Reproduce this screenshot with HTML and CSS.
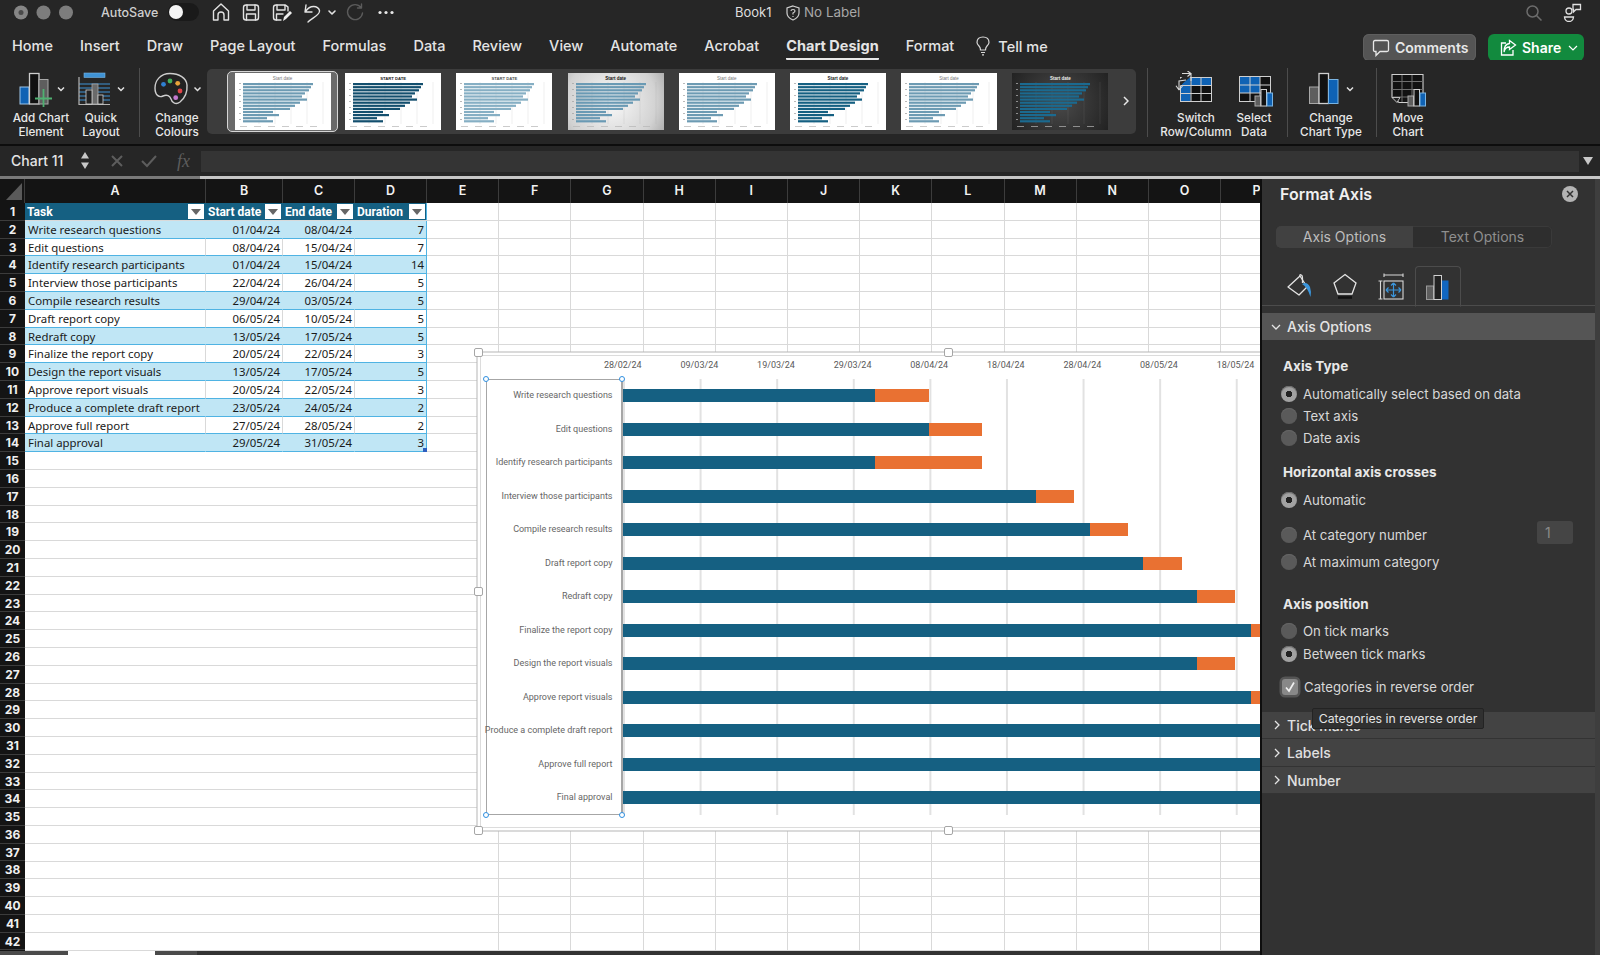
FILE: index.html
```html
<!DOCTYPE html>
<html lang="en">
<head>
<meta charset="utf-8">
<title>Book1</title>
<link rel="stylesheet" href="styles.css">
</head>
<body>
<svg class="defs" width="0" height="0" aria-hidden="true">
  <symbol id="bars" viewBox="0 0 96 57">
    <g stroke="#9a9a9a" stroke-opacity=".3" stroke-width=".5"><path d="M24 9V51M40 9V51M56 9V51M72 9V51M88 9V51"/></g>
    <g fill="currentColor">
      <rect x="8" y="10" width="70" height="2.200"/><rect x="8" y="13.100" width="68" height="2.200"/><rect x="8" y="16.200" width="66" height="2.200"/><rect x="8" y="19.300" width="62" height="2.200"/><rect x="8" y="22.400" width="59" height="2.200"/><rect x="8" y="25.500" width="64" height="2.200"/><rect x="8" y="28.600" width="57" height="2.200"/><rect x="8" y="31.700" width="52" height="2.200"/><rect x="8" y="34.800" width="47" height="2.200"/><rect x="8" y="37.900" width="30" height="2.200"/><rect x="8" y="41" width="36" height="2.200"/><rect x="8" y="44.100" width="24" height="2.200"/><rect x="8" y="47.200" width="30" height="2.200"/>
    </g>
    <g fill="#b5b5b5" fill-opacity=".7">
      <rect x="5" y="53" width="7" height="1"/><rect x="19" y="53" width="7" height="1"/><rect x="33" y="53" width="7" height="1"/><rect x="47" y="53" width="7" height="1"/><rect x="61" y="53" width="7" height="1"/><rect x="75" y="53" width="7" height="1"/>
    </g>
    <g fill="#a8a8a8"><rect x="4" y="10" width="2" height=".8"/><rect x="4" y="16" width="2" height=".8"/><rect x="4" y="22" width="2" height=".8"/><rect x="4" y="28" width="2" height=".8"/><rect x="4" y="34" width="2" height=".8"/><rect x="4" y="40" width="2" height=".8"/><rect x="4" y="46" width="2" height=".8"/></g>
  </symbol>
</svg>
<div class="app">
  <header class="titlebar">
    <svg class="lights" viewBox="12 0 62 26" width="62" height="26"><circle cx="21" cy="12.500" r="7" fill="#868686"/><circle cx="21" cy="12.500" r="2.500" fill="#4a4a4a"/><circle cx="43.500" cy="12.500" r="7" fill="#7d7d7d"/><circle cx="66" cy="12.500" r="7" fill="#7d7d7d"/></svg>
    <span class="autosave">AutoSave</span>
    <span class="toggle"><span class="knob"></span></span>
    <svg class="quick" viewBox="208 0 194 26" width="194" height="26" fill="none" stroke="#e2e2e2" stroke-width="1.400" stroke-linejoin="round" stroke-linecap="round">
      <path d="M221 4L213.500 11V20H218V15Q218 12 221 12Q224 12 224 15V20H228.500V11Z"/>
      <rect x="243.500" y="5" width="15" height="15" rx="2.500"/><path d="M247 5V10H255V5M246.500 20V14H255.500V20"/>
      <path d="M281 20H276Q273.500 20 273.500 17.500V7.500Q273.500 5 276 5H284Q286 5 288 7V11"/><path d="M277 5V10H285V5M276.500 20V14H283"/>
      <path d="M283 21L284 17L290 11L292 13L286 19Z" fill="#f0f0f0" stroke="none"/>
      <path d="M306 5L305 12L312 12M305.500 11.500C310 4.500 318 5.500 319.500 10.500C320.500 15 312 18 308 22"/>
      <path d="M329 11L332 14L335 11" stroke-width="1.600"/>
      <path d="M361 7.500A7.500 7.500 0 1 0 362.500 13M361.500 4V8H357.500" stroke="#5b5b5b"/>
      <g fill="#e8e8e8" stroke="none"><circle cx="380" cy="12.500" r="1.600"/><circle cx="386" cy="12.500" r="1.600"/><circle cx="392" cy="12.500" r="1.600"/></g>
    </svg>
    <span class="doc">Book1</span>
    <svg class="shield" viewBox="0 0 14 16" width="14" height="16" fill="none" stroke="#d0d0d0" stroke-width="1.200"><path d="M7 1L13 3V8Q13 12.500 7 15Q1 12.500 1 8V3Z"/><path d="M5 6Q5 4.500 7 4.500Q9 4.500 9 6Q9 7 7 8V9.500M7 11V12"/></svg>
    <span class="label">No Label</span>
    <svg class="search" viewBox="0 0 18 18" width="18" height="18" fill="none" stroke="#6c6c6c" stroke-width="1.500"><circle cx="7.500" cy="7.500" r="5.500"/><path d="M11.500 11.500L16.500 16.500"/></svg>
    <svg class="people" viewBox="0 0 20 20" width="20" height="20" fill="none" stroke="#e0e0e0" stroke-width="1.300"><circle cx="6" cy="9" r="3"/><path d="M1.500 15H10.500Q10 19.500 6 19.500Q2 19.500 1.500 15Z"/><path d="M10 2.500H17.500V7.500H13L10.500 10V7.500H10Z"/></svg>
  </header>

  <nav class="tabs">
    <span class="tab">Home</span><span class="tab">Insert</span><span class="tab">Draw</span><span class="tab">Page Layout</span><span class="tab">Formulas</span><span class="tab">Data</span><span class="tab">Review</span><span class="tab">View</span><span class="tab">Automate</span><span class="tab">Acrobat</span><span class="tab tab-active">Chart Design</span><span class="tab">Format</span>
    <span class="tellme"><svg viewBox="0 0 14 20" width="14" height="20" fill="none" stroke="#d8d8d8" stroke-width="1.200"><path d="M4.500 14Q4.500 11.500 3 10Q1 8 1 6.500Q1 1 7 1Q13 1 13 6.500Q13 8 11 10Q9.500 11.500 9.500 14Z"/><path d="M5 16.500H9M6 18.800H8"/></svg>Tell me</span>
    <span class="tab-actions">
      <span class="btn btn-comments"><svg viewBox="0 0 18 18" width="18" height="18" fill="none" stroke="#e8e8e8" stroke-width="1.300"><path d="M3 1.500H15Q16.500 1.500 16.500 3V11Q16.500 12.500 15 12.500H8L4 16.500V12.500H3Q1.500 12.500 1.500 11V3Q1.500 1.500 3 1.500Z"/></svg>Comments</span>
      <span class="btn btn-share"><svg viewBox="0 0 18 18" width="18" height="18" fill="none" stroke="#fff" stroke-width="1.300"><path d="M7 4H2.500V16H14V11"/><path d="M10.500 1.500L16.500 6L10.500 10.500V8Q6 8 5 13Q5 5 10.500 4.500Z"/></svg>Share<svg class="chev" viewBox="0 0 10 6" width="10" height="6" fill="none" stroke="#fff" stroke-width="1.200"><path d="M1 1L5 5L9 1"/></svg></span>
    </span>
  </nav>

  <section class="ribbon">
    <div class="tool tool-add">
      <svg viewBox="12 71 58 36" width="58" height="36">
        <rect x="20" y="87" width="9" height="17" fill="#0f62b4" stroke="#9cc4e8"/>
        <rect x="29.500" y="73.500" width="9.500" height="30.500" fill="#111" stroke="#cfcfcf" stroke-width="1.300"/>
        <rect x="39" y="79.500" width="9" height="24.500" fill="#5e5e5e" stroke="#a8a8a8"/>
        <path d="M43.500 89V107M35 98.500H52" stroke="#4fb071" stroke-width="1.800"/>
        <path d="M58 87.500L61 90.500L64 87.500" fill="none" stroke="#e0e0e0" stroke-width="1.500"/>
      </svg>
      <span class="tool-label">Add Chart<br>Element</span>
    </div>
    <div class="tool tool-quick">
      <svg viewBox="70 71 62 36" width="62" height="36">
        <rect x="84" y="73" width="21" height="4.500" fill="#3f93d6" stroke="#7ab4e2" stroke-width=".6"/>
        <path d="M79 84H110M79 88H110M79 92H110M79 96H110M79 100H110" stroke="#3f93d6" stroke-width="1"/>
        <path d="M79 77V104.500H110" fill="none" stroke="#b4b4b4" stroke-width="1.200"/>
        <rect x="92" y="84" width="6" height="20" fill="#6a6a6a" stroke="#a8a8a8" stroke-width=".8"/>
        <rect x="86" y="90" width="6" height="14" fill="#222" stroke="#cfcfcf" stroke-width=".8"/>
        <rect x="98" y="95" width="5" height="9" fill="#222" stroke="#cfcfcf" stroke-width=".8"/>
        <path d="M118 87.500L121 90.500L124 87.500" fill="none" stroke="#e0e0e0" stroke-width="1.500"/>
      </svg>
      <span class="tool-label">Quick<br>Layout</span>
    </div>
    <span class="sep sep-1"></span>
    <div class="tool tool-colours">
      <svg viewBox="147 71 60 36" width="60" height="36">
        <path d="M170 73.500C160 73.500 155 81 155 88C155 95 159 98 163 96C167 94 170 96 171 99C172 103 176 105 180 102C185 98 187.500 92 187 85C186.500 78 179 73.500 170 73.500Z" fill="#222" stroke="#cdcdcd" stroke-width="1.400"/>
        <circle cx="163.500" cy="84.300" r="2.400" fill="#2f7fd0"/><circle cx="170" cy="81" r="2.400" fill="#44b05c"/><circle cx="177.700" cy="83.300" r="2.400" fill="#e8a33a"/><circle cx="180" cy="91" r="2.400" fill="#e0454a"/><circle cx="175.700" cy="97.700" r="2.400" fill="#c47ad0"/>
        <path d="M194.500 87.500L197.500 90.500L200.500 87.500" fill="none" stroke="#e0e0e0" stroke-width="1.500"/>
      </svg>
      <span class="tool-label">Change<br>Colours</span>
    </div>
    <div class="gallery">
      <div class="thumb thumb-sel"><div class="thumb-in thumb-plain"><span class="thumb-title">Start date</span><svg class="thumb-bars"><use href="#bars"/></svg></div></div>
      <div class="thumb thumb-strong"><span class="thumb-title thumb-caps">START DATE</span><svg class="thumb-bars"><use href="#bars"/></svg></div>
      <div class="thumb thumb-light"><span class="thumb-title thumb-caps">START DATE</span><svg class="thumb-bars"><use href="#bars"/></svg></div>
      <div class="thumb thumb-grad"><span class="thumb-title">Start date</span><svg class="thumb-bars"><use href="#bars"/></svg></div>
      <div class="thumb thumb-plain"><span class="thumb-title">Start date</span><svg class="thumb-bars"><use href="#bars"/></svg></div>
      <div class="thumb thumb-blue"><span class="thumb-title">Start date</span><svg class="thumb-bars"><use href="#bars"/></svg></div>
      <div class="thumb thumb-plain"><span class="thumb-title">Start date</span><svg class="thumb-bars"><use href="#bars"/></svg></div>
      <div class="thumb thumb-dark"><span class="thumb-title">Start date</span><svg class="thumb-bars"><use href="#bars"/></svg></div>
      <svg class="gallery-next" viewBox="0 0 6 10" width="6" height="10" fill="none" stroke="#e8e8e8" stroke-width="1.500"><path d="M1 1L5 5L1 9"/></svg>
    </div>
    <span class="sep sep-2"></span>
    <div class="tool tool-switch">
      <svg viewBox="1167 71 58 36" width="58" height="36">
        <rect x="1180.500" y="77.500" width="31" height="24" fill="#111" stroke="#cfcfcf"/>
        <path d="M1191 78H1211V85.500H1191ZM1181 86H1190.500V101H1181ZM1186 78H1190.500V85.500H1181Z" fill="#0f62b4"/>
        <path d="M1181 85.500H1211M1181 93.500H1211M1191 78V101M1201 78V101" stroke="#cfcfcf" fill="none"/>
        <path d="M1178 84L1190 74" stroke="#262626" stroke-width="5"/>
        <path d="M1182 73.500H1191V81M1187.500 71L1191 73.500L1187.500 76.500M1179 90V81L1186 80M1179 90L1176 85.800M1179 90L1182.500 86" fill="none" stroke="#d8d8d8" stroke-width="1.100"/>
      </svg>
      <span class="tool-label">Switch<br>Row/Column</span>
    </div>
    <div class="tool tool-select">
      <svg viewBox="1225 71 58 36" width="58" height="36">
        <rect x="1239.500" y="76.500" width="31" height="25" fill="#111" stroke="#cfcfcf"/>
        <rect x="1240" y="77" width="20" height="16" fill="#0f62b4"/>
        <path d="M1240 85H1270M1240 93H1270M1250 77V101M1260 77V101" stroke="#cfcfcf" fill="none"/>
        <rect x="1255" y="96" width="5.500" height="10" fill="#5e5e5e" stroke="#a8a8a8"/>
        <rect x="1261" y="89.500" width="5.500" height="16.500" fill="#111" stroke="#cfcfcf"/>
        <rect x="1267" y="93" width="5.500" height="13" fill="#0f62b4" stroke="#7ab4e2"/>
      </svg>
      <span class="tool-label">Select<br>Data</span>
    </div>
    <span class="sep sep-3"></span>
    <div class="tool tool-type">
      <svg viewBox="1291 71 80 36" width="80" height="36">
        <rect x="1309.500" y="87" width="9.500" height="16.500" fill="#5e5e5e" stroke="#a8a8a8"/>
        <rect x="1319" y="73.500" width="9.500" height="30" fill="#111" stroke="#cfcfcf" stroke-width="1.300"/>
        <rect x="1328.500" y="79.500" width="9.500" height="24" fill="#0f62b4" stroke="#7ab4e2"/>
        <path d="M1347 87.500L1350 90.500L1353 87.500" fill="none" stroke="#e0e0e0" stroke-width="1.500"/>
      </svg>
      <span class="tool-label">Change<br>Chart Type</span>
    </div>
    <span class="sep sep-4"></span>
    <div class="tool tool-move">
      <svg viewBox="1380 71 56 36" width="56" height="36">
        <path d="M1392 74.500H1423V102.500H1399L1392 97Z" fill="#111" stroke="#cfcfcf" stroke-width="1.100"/>
        <path d="M1392 81.500H1423M1392 89.500H1423M1392 97H1423M1402 75V102M1412 75V102" stroke="#6f6f6f" fill="none"/>
        <path d="M1392 97.500H1400L1397 102.500Z" fill="#222" stroke="#cfcfcf" stroke-width=".9"/>
        <rect x="1408" y="96" width="5.500" height="10" fill="#5e5e5e" stroke="#a8a8a8"/>
        <rect x="1414" y="89.500" width="5.500" height="16.500" fill="#111" stroke="#cfcfcf"/>
        <rect x="1420" y="93" width="5.500" height="13" fill="#0f62b4" stroke="#7ab4e2"/>
      </svg>
      <span class="tool-label">Move<br>Chart</span>
    </div>
  </section>

  <section class="formula">
    <span class="namebox">Chart 11</span>
    <svg class="spin" viewBox="0 0 10 19" width="10" height="19" fill="#c8c8c8"><path d="M5 1L9 7.500H1ZM5 18L1 11.500H9Z"/></svg>
    <svg class="fx-btns" viewBox="0 0 90 18" width="90" height="18" fill="none" stroke="#5d5d5d" stroke-width="2"><path d="M3 4L13 14M13 4L3 14M33 9L38 14L47 4"/></svg>
    <span class="fx">fx</span>
    <span class="formula-input"></span>
    <svg class="formula-down" viewBox="0 0 10 8" width="10" height="8" fill="#c8c8c8"><path d="M0 0H10L5 8Z"/></svg>
  </section>
  <div class="rule"></div>

  <main class="workspace">
    <section class="sheet">
      <div class="colhead">
        <div class="corner"><span class="corner-tri"></span></div>
        <div class="collabels">
          <span>A</span><span>B</span><span>C</span><span>D</span><span>E</span><span>F</span><span>G</span><span>H</span><span>I</span><span>J</span><span>K</span><span>L</span><span>M</span><span>N</span><span>O</span><span>P</span>
        </div>
      </div>
      <div class="sheet-body">
        <div class="rowheads">
          <span>1</span><span>2</span><span>3</span><span>4</span><span>5</span><span>6</span><span>7</span><span>8</span><span>9</span><span>10</span><span>11</span><span>12</span><span>13</span><span>14</span><span>15</span><span>16</span><span>17</span><span>18</span><span>19</span><span>20</span><span>21</span><span>22</span><span>23</span><span>24</span><span>25</span><span>26</span><span>27</span><span>28</span><span>29</span><span>30</span><span>31</span><span>32</span><span>33</span><span>34</span><span>35</span><span>36</span><span>37</span><span>38</span><span>39</span><span>40</span><span>41</span><span>42</span>
        </div>
        <div class="grid">
          <i class="vline"></i><i class="vline"></i><i class="vline"></i><i class="vline"></i><i class="vline"></i><i class="vline"></i><i class="vline"></i><i class="vline"></i><i class="vline"></i><i class="vline"></i><i class="vline"></i><i class="vline"></i><i class="vline"></i><i class="vline"></i><i class="vline"></i><i class="vline"></i>
          <div class="table">
            <div class="th">Task<b class="filter"></b></div><div class="th">Start date<b class="filter"></b></div><div class="th">End date<b class="filter"></b></div><div class="th">Duration<b class="filter"></b></div>
            <div class="tr band"><span>Write research questions</span><span class="n">01/04/24</span><span class="n">08/04/24</span><span class="n">7</span></div>
            <div class="tr"><span>Edit questions</span><span class="n">08/04/24</span><span class="n">15/04/24</span><span class="n">7</span></div>
            <div class="tr band"><span>Identify research participants</span><span class="n">01/04/24</span><span class="n">15/04/24</span><span class="n">14</span></div>
            <div class="tr"><span>Interview those participants</span><span class="n">22/04/24</span><span class="n">26/04/24</span><span class="n">5</span></div>
            <div class="tr band"><span>Compile research results</span><span class="n">29/04/24</span><span class="n">03/05/24</span><span class="n">5</span></div>
            <div class="tr"><span>Draft report copy</span><span class="n">06/05/24</span><span class="n">10/05/24</span><span class="n">5</span></div>
            <div class="tr band"><span>Redraft copy</span><span class="n">13/05/24</span><span class="n">17/05/24</span><span class="n">5</span></div>
            <div class="tr"><span>Finalize the report copy</span><span class="n">20/05/24</span><span class="n">22/05/24</span><span class="n">3</span></div>
            <div class="tr band"><span>Design the report visuals</span><span class="n">13/05/24</span><span class="n">17/05/24</span><span class="n">5</span></div>
            <div class="tr"><span>Approve report visuals</span><span class="n">20/05/24</span><span class="n">22/05/24</span><span class="n">3</span></div>
            <div class="tr band"><span>Produce a complete draft report</span><span class="n">23/05/24</span><span class="n">24/05/24</span><span class="n">2</span></div>
            <div class="tr"><span>Approve full report</span><span class="n">27/05/24</span><span class="n">28/05/24</span><span class="n">2</span></div>
            <div class="tr band"><span>Final approval</span><span class="n">29/05/24</span><span class="n">31/05/24</span><span class="n fillhandle">3</span></div>
          </div>

          <div class="chart">
            <i class="handle h-tl"></i><i class="handle h-tm"></i><i class="handle h-ml"></i><i class="handle h-bl"></i><i class="handle h-bm"></i>
            <div class="axis"><span>28/02/24</span><span>09/03/24</span><span>19/03/24</span><span>29/03/24</span><span>08/04/24</span><span>18/04/24</span><span>28/04/24</span><span>08/05/24</span><span>18/05/24</span></div>
            <div class="plot">
              <div class="cats">
                <i class="dot d-tl"></i><i class="dot d-tr"></i><i class="dot d-bl"></i><i class="dot d-br"></i>
                <span>Write research questions</span><span>Edit questions</span><span>Identify research participants</span><span>Interview those participants</span><span>Compile research results</span><span>Draft report copy</span><span>Redraft copy</span><span>Finalize the report copy</span><span>Design the report visuals</span><span>Approve report visuals</span><span>Produce a complete draft report</span><span>Approve full report</span><span>Final approval</span>
              </div>
              <div class="tracks">
                <div class="track"><i class="start" style="width:252.8px"></i><i class="dur" style="width:53.6px"></i></div>
                <div class="track"><i class="start" style="width:306.4px"></i><i class="dur" style="width:53.6px"></i></div>
                <div class="track"><i class="start" style="width:252.8px"></i><i class="dur" style="width:107.2px"></i></div>
                <div class="track"><i class="start" style="width:413.6px"></i><i class="dur" style="width:38.3px"></i></div>
                <div class="track"><i class="start" style="width:467.3px"></i><i class="dur" style="width:38.3px"></i></div>
                <div class="track"><i class="start" style="width:520.9px"></i><i class="dur" style="width:38.3px"></i></div>
                <div class="track"><i class="start" style="width:574.5px"></i><i class="dur" style="width:38.3px"></i></div>
                <div class="track"><i class="start" style="width:628.1px"></i><i class="dur" style="width:23px"></i></div>
                <div class="track"><i class="start" style="width:574.5px"></i><i class="dur" style="width:38.3px"></i></div>
                <div class="track"><i class="start" style="width:628.1px"></i><i class="dur" style="width:23px"></i></div>
                <div class="track"><i class="start" style="width:651.1px"></i><i class="dur" style="width:15.3px"></i></div>
                <div class="track"><i class="start" style="width:681.7px"></i><i class="dur" style="width:15.3px"></i></div>
                <div class="track"><i class="start" style="width:697.1px"></i><i class="dur" style="width:23px"></i></div>
              </div>
            </div>
          </div>
        </div>
      </div>
      <div class="sheet-foot"><i class="foot-a"></i><i class="foot-tab"></i><i class="foot-b"></i><i class="foot-c"></i></div>
    </section>

    <aside class="panel">
      <div class="panel-head">
        <h2>Format Axis</h2>
        <svg class="close" viewBox="0 0 16 16" width="16" height="16"><circle cx="8" cy="8" r="8" fill="#b4b4b4"/><path d="M5 5L11 11M11 5L5 11" stroke="#333" stroke-width="1.500"/></svg>
      </div>
      <div class="seg"><span class="seg-on">Axis Options</span><span>Text Options</span></div>
      <div class="picons">
        <span class="picon">
          <svg viewBox="0 0 25 24" width="25" height="24" fill="none" stroke="#e4e4e4" stroke-width="1.300" stroke-linejoin="round"><path d="M1 13L13 2L20 13L12 21Z"/><path d="M13 2Q12.500 .5 14 .8Q15.500 1 15.500 5V9"/><path d="M15 10Q20 7 23 13Q24.500 17 23.500 23Q21.500 17 19.500 14Q17.500 11.500 15 10Z" fill="#3b96dc" stroke="none"/></svg>
        </span>
        <span class="picon">
          <svg viewBox="0 0 24 26" width="24" height="26" fill="none" stroke="#e4e4e4" stroke-width="1.300"><path d="M12 1.500L23 10L19 21H5L1 10Z"/><path d="M5 24.500H19" stroke="#111" stroke-width="2.500"/></svg>
        </span>
        <span class="picon">
          <svg viewBox="0 0 26 27" width="26" height="27" fill="none" stroke="#d8d8d8" stroke-width="1.100"><path d="M6 2H25M6 .5V4M25 .5V4"/><rect x="6" y="8" width="19" height="18"/><path d="M.5 8H4.500M.5 26H4.500M2.500 8V26"/><path d="M8 17H23M15.500 10V24M8 17L10.500 14.500M8 17L10.500 19.500M23 17L20.500 14.500M23 17L20.500 19.500M15.500 10L13 12.500M15.500 10L18 12.500M15.500 24L13 21.500M15.500 24L18 21.500" stroke="#3b96dc" stroke-width="1.200"/></svg>
        </span>
        <span class="picon picon-on">
          <svg viewBox="0 0 24 26" width="24" height="26"><rect x=".5" y="12" width="7" height="13.500" fill="#5e5e5e" stroke="#9a9a9a"/><rect x="8" y="1.500" width="7.500" height="24" fill="#222" stroke="#d0d0d0"/><rect x="16" y="6.500" width="6.500" height="19" fill="#1166c0"/></svg>
        </span>
      </div>
      <div class="sec-open"><svg viewBox="0 0 10 6" width="10" height="6" fill="none" stroke="#e4e4e4" stroke-width="1.300"><path d="M1 1L5 5L9 1"/></svg>Axis Options</div>

      <h3 class="opt-title t1">Axis Type</h3>
      <div class="opts o1">
        <label class="radio on">Automatically select based on data</label>
        <label class="radio">Text axis</label>
        <label class="radio">Date axis</label>
      </div>
      <h3 class="opt-title t2">Horizontal axis crosses</h3>
      <div class="opts o2"><label class="radio on">Automatic</label></div>
      <div class="opts o3"><label class="radio">At category number</label><span class="numbox">1</span></div>
      <div class="opts o4"><label class="radio">At maximum category</label></div>
      <h3 class="opt-title t3">Axis position</h3>
      <div class="opts o5">
        <label class="radio">On tick marks</label>
        <label class="radio on">Between tick marks</label>
      </div>
      <div class="check-row"><span class="check"><svg viewBox="0 0 12 12" width="12" height="12" fill="none" stroke="#f0f0f0" stroke-width="1.700"><path d="M2 6.500L5 10L10 1.500"/></svg></span>Categories in reverse order</div>

      <div class="sec-list">
        <div class="sec"><svg viewBox="0 0 6 10" width="6" height="10" fill="none" stroke="#e4e4e4" stroke-width="1.300"><path d="M1 1L5 5L1 9"/></svg>Tick marks</div>
        <div class="sec"><svg viewBox="0 0 6 10" width="6" height="10" fill="none" stroke="#e4e4e4" stroke-width="1.300"><path d="M1 1L5 5L1 9"/></svg>Labels</div>
        <div class="sec"><svg viewBox="0 0 6 10" width="6" height="10" fill="none" stroke="#e4e4e4" stroke-width="1.300"><path d="M1 1L5 5L1 9"/></svg>Number</div>
      </div>
      <div class="tooltip">Categories in reverse order</div>
    </aside>
  </main>
</div>
</body>
</html>
```
FILE: styles.css
```css
* { box-sizing: border-box; }
html, body { margin: 0; height: 100%; overflow: hidden; background: #262626; }
body { font-family: "Inter", "Liberation Sans", sans-serif; color: #e6e6e6; }
.defs { display: block; }
.app { width: 1600px; height: 955px; display: flex; flex-direction: column; overflow: hidden; }

/* Title bar */
.titlebar { height: 32px; flex: none; display: flex; align-items: flex-start; background: #262626; font-size: 13px; }
.lights { margin-left: 12px; flex: none; }
.autosave { width: 67px; margin-left: 27px; line-height: 25px; font-weight: 500; color: #cfcfcf; font-size: 12.5px; }
.toggle { width: 31px; height: 18px; margin-top: 3px; border-radius: 9px; background: #1a1a1a; display: flex; align-items: center; padding-left: 1px; }
.knob { width: 14px; height: 14px; border-radius: 50%; background: #f4f4f4; }
.quick { margin-left: 9px; flex: none; }
.doc { margin-left: 333px; width: 49px; line-height: 25px; color: #dedede; }
.shield { margin: 5px 0 0 2px; flex: none; }
.label { margin-left: 4px; line-height: 25px; color: #a8a8a8; font-size: 13.4px; }
.search { margin: 4px 0 0 auto; flex: none; }
.people { margin: 2px 17px 0 20px; flex: none; }

/* Tabs */
.tabs { height: 28px; flex: none; display: flex; align-items: flex-start; gap: 27px; padding-left: 12px; font-size: 14.5px; font-weight: 500; background: #262626; color: #e4e4e4; }
.tab { line-height: 28px; height: 28px; }
.tab-active { font-weight: 700; border-bottom: 2px solid #e8e8e8; border-radius: 1px; }
.tellme { display: flex; align-items: center; gap: 8px; height: 28px; margin-left: -5px; }
.tab-actions { margin-left: auto; display: flex; gap: 12px; padding: 2px 16px 0 0; }
.btn { height: 27px; border-radius: 6px; display: flex; align-items: center; font-weight: 600; font-size: 14px; }
.btn-comments { width: 113px; background: #545454; color: #e8e8e8; padding-left: 9px; gap: 5px; box-shadow: inset 0 0 0 1px #5e5e5e; }
.btn-share { width: 96px; background: #128a3e; color: #fff; padding-left: 11px; gap: 5px; }
.chev { margin-left: 2px; }

/* Ribbon */
.ribbon { height: 86px; flex: none; display: flex; align-items: flex-start; padding-left: 12px; background: #262626; border-bottom: 2px solid #0d0d0d; }
.tool { flex: none; display: flex; flex-direction: column; align-items: center; padding-top: 11px; }
.tool svg { display: block; flex: none; }
.tool-label { margin-top: 5px; font-size: 11.7px; line-height: 13.5px; text-align: center; color: #e8e8e8; font-weight: 500; white-space: nowrap; }
.tool-add { width: 58px; }
.tool-quick { width: 62px; }
.tool-colours { width: 60px; }
.tool-switch { width: 58px; }
.tool-select { width: 58px; }
.tool-type { width: 80px; }
.tool-move { width: 56px; }
.sep { flex: none; width: 1px; height: 69px; margin-top: 8px; background: #4c4c4c; }
.sep-1 { margin: 8px 7px 0 7px; }
.sep-2 { margin: 8px 19px 0 11px; }
.sep-3 { margin: 8px 3px 0 4px; }
.sep-4 { margin: 8px 3px 0 5px; }
.gallery { flex: none; width: 929px; height: 65px; margin-top: 9px; padding: 4px 0 0 20px; border-radius: 5px; background: #3c3c3c; display: flex; align-items: flex-start; gap: 15.200px; }
.thumb { flex: none; width: 96px; height: 57px; display: flex; flex-direction: column; align-items: center; overflow: hidden; background: #fff; color: #6d9bb3; position: relative; }
.thumb-sel { width: 111px; height: 61px; margin: -2px -8px 0 0; border: 1.5px solid #d6d6d6; border-radius: 5px; background: #6a6a6a; align-items: center; justify-content: center; padding: 0; }
.thumb-in { width: 96px; height: 57px; background: #fff; display: flex; flex-direction: column; align-items: center; position: relative; color: #6d9bb3; }
.thumb-title { font-size: 4.500px; line-height: 6px; margin-top: 3px; color: #777; font-family: "Liberation Sans", sans-serif; }
.thumb-caps { font-weight: 700; font-size: 4.200px; color: #555; }
.thumb-bars { position: absolute; left: 0; top: 0; width: 96px; height: 57px; }
.thumb-strong { color: #134f6e; }
.thumb-strong .thumb-title { color: #222; }
.thumb-light { color: #86afc4; }
.thumb-grad { background: radial-gradient(circle at 45% 50%, #fafafa 0%, #d2d2d2 75%, #b0b0b0 100%); color: #6a9ab4; }
.thumb-grad .thumb-title { color: #111; font-weight: 700; }
.thumb-blue { color: #156082; }
.thumb-blue .thumb-title { color: #222; font-weight: 700; }
.thumb-dark { background: radial-gradient(circle at 50% 50%, #4a4a4a 0%, #222 100%); color: #1b6a90; }
.thumb-dark .thumb-title { color: #eee; font-weight: 700; }
.gallery-next { margin: 23px 0 0 -1px; flex: none; }

/* Formula bar */
.formula { height: 30px; flex: none; display: flex; align-items: center; background: #262626; font-size: 14px; }
.namebox { width: 80px; padding-left: 11px; margin-top: -2px; font-weight: 500; color: #e4e4e4; }
.spin { flex: none; margin: -2px 8px 0 0; }
.fx-btns { flex: none; margin-left: 11px; }
.fx { width: 24px; margin-left: -22px; font-family: "Liberation Serif", serif; font-style: italic; font-size: 18px; color: #5d5d5d; }
.formula-input { width: 1378px; height: 21px; background: #343434; }
.formula-down { flex: none; margin-left: 4px; }
.rule { height: 3px; flex: none; background: linear-gradient(to right, #7a7a7a 0 200px, #c6c6c6 200px); }

/* Workspace */
.workspace { flex: 1; min-height: 0; display: flex; background: #fff; }
.sheet { width: 1260px; flex: none; display: flex; flex-direction: column; overflow: hidden; --cols: 181px 77px 72px 72px repeat(12, 72.2px); background: #fff; }
.colhead { height: 24px; flex: none; display: flex; background: #141414; }
.corner { width: 25px; flex: none; height: 24px; border-right: 1px solid #3c3c3c; position: relative; }
.corner-tri { display: block; width: 16px; height: 17px; margin: 4px 0 0 6px; background: #5a5a5a; clip-path: polygon(100% 0, 100% 100%, 0 100%); }
.collabels { display: grid; grid-template-columns: var(--cols); flex: none; }
.collabels span { text-align: center; line-height: 24px; font-size: 12.5px; font-weight: 600; color: #f2f2f2; border-right: 1px solid #3c3c3c; }
.sheet-body { flex: none; height: 747.600px; display: flex; }
.rowheads { width: 25px; flex: none; display: grid; grid-auto-rows: 17.8px; background: #141414; }
.rowheads span { text-align: center; line-height: 18.5px; font-size: 12px; font-weight: 700; color: #f0f0f0; border-bottom: 1px solid #3c3c3c; }
.grid { position: relative; display: grid; grid-template-columns: var(--cols); grid-template-rows: repeat(42, 17.8px); flex: none; background: repeating-linear-gradient(to bottom, #fff 0 16.8px, #d9d9d9 16.8px 17.8px); }
.vline { grid-row: 1 / 43; border-right: 1px solid #d9d9d9; }
.table { grid-row: 1 / 15; grid-column: 1 / 5; display: grid; grid-template-columns: subgrid; grid-template-rows: subgrid; font-family: "Noto Sans", sans-serif; font-size: 11.4px; color: #1a1a1a; }
.th { display: flex; justify-content: space-between; align-items: center; background: #156082; color: #fff; font-family: "Roboto", sans-serif; font-size: 12px; font-weight: 700; padding: 1px 1px 0 2px; height: 16.8px; border-right: 1px solid #156082; line-height: 16px; white-space: nowrap; }
.filter { flex: none; width: 16px; height: 15px; background: #fff; position: relative; display: flex; align-items: center; justify-content: center; }
.filter::after { content: ""; border-left: 5px solid transparent; border-right: 5px solid transparent; border-top: 6px solid #666; }
.tr { display: contents; }
.tr span { padding: 0 2px 0 3px; line-height: 18.5px; white-space: nowrap; overflow: hidden; border-bottom: 1px solid #4fb3e3; border-right: 1px solid #d9d9d9; background: #fff; }
.tr.band span { background: #c0e6f5; border-right-color: #c0e6f5; }
.tr span.n { text-align: right; }
.tr span:nth-child(4), .th:nth-child(4) { border-right-color: #4fb3e3; }
.tr span.fillhandle { position: relative; overflow: visible; }
.fillhandle::after { content: ""; position: absolute; right: -1px; bottom: -1px; width: 4px; height: 4px; background: #2d5fc0; }

/* Chart */
.chart { position: absolute; left: 456px; top: 152.500px; width: 1000px; height: 471.500px; padding-left: 5px; background: #fff; box-shadow: 0 0 0 1px #dcdcdc, 0 0 0 3.500px #fff, 0 0 0 4.500px #b5b5b5; }
.handle { position: absolute; width: 9px; height: 9px; border: 1px solid #a6a6a6; border-radius: 2px; background: #fff; z-index: 2; }
.h-tl { left: -7.500px; top: -8px; }
.h-tm { left: 462.500px; top: -8px; }
.h-ml { left: -7.500px; top: 231px; }
.h-bl { left: -7.500px; top: 470px; }
.h-bm { left: 462.500px; top: 470px; }
.axis { display: flex; height: 23.500px; padding-left: 98.500px; font-family: "Roboto", sans-serif; font-size: 9px; color: #595959; }
.axis span { width: 76.6px; flex: none; text-align: center; line-height: 19px; }
.plot { display: flex; height: 435.500px; }
.cats { width: 136.500px; flex: none; position: relative; display: flex; flex-direction: column; border: 1.5px solid #a6a6a6; border-right-width: 2px; font-family: "Roboto", sans-serif; font-size: 9px; color: #666; }
.cats span { height: 33.5px; flex: none; text-align: right; padding-right: 8px; line-height: 30.5px; white-space: nowrap; margin-left: -12px; }
.dot { position: absolute; width: 6px; height: 6px; border-radius: 50%; border: 1.2px solid #2f8fe0; background: #fff; }
.d-tl { left: -4px; top: -4px; }
.d-tr { right: -4px; top: -4px; }
.d-bl { left: -4px; bottom: -4px; }
.d-br { right: -4px; bottom: -4px; }
.tracks { flex: 1; display: grid; grid-auto-rows: 33.5px; background: linear-gradient(to right, #e2e2e2 0 1.500px, transparent 1.500px) 76.6px 0 / 76.6px 100%; }
.track { display: flex; align-items: center; }
.track i { display: block; height: 13px; flex: none; }
.start { background: #156082; }
.dur { background: #e97132; }

/* Sheet foot */
.sheet-foot { flex: 1; display: flex; background: #3a3a3a; }
.foot-a { width: 68px; background: #4a4a4a; }
.foot-tab { width: 87px; background: #fff; }
.foot-b { width: 42px; background: #4a4a4a; }
.foot-c { flex: 1; background: #333; }

/* Panel */
.panel { flex: 1; position: relative; background: #323232; border-left: 2px solid #0e0e0e; border-right: 5px solid #3e3e3e; overflow: hidden; }
.panel-head { height: 30px; display: flex; align-items: center; justify-content: space-between; padding: 0 17px 0 18px; }
.panel-head h2 { margin: 0; font-size: 16px; font-weight: 600; color: #f0f0f0; }
.close { flex: none; }
.seg { display: flex; width: 276px; height: 22px; margin: 17px 0 0 14px; border-radius: 5px; background: #2e2e2e; box-shadow: inset 0 0 0 1px #3a3a3a; font-size: 14px; color: #8f8f8f; }
.seg span { flex: 1; text-align: center; line-height: 22px; }
.seg .seg-on { flex: none; width: 137px; background: #414141; color: #bdbdbd; border-radius: 5px 0 0 5px; }
.picons { height: 40px; margin-top: 18px; display: flex; align-items: flex-end; padding-left: 14px; border-bottom: 1.5px solid #4c4c4c; gap: 0; }
.picon { width: 46px; height: 40px; display: flex; align-items: center; justify-content: center; padding-top: 2px; }
.picon-on { border: 1.5px solid #4c4c4c; border-bottom: 1.5px solid #323232; border-radius: 4px 4px 0 0; margin: 0 0 -1.5px 1px; width: 46px; height: 41px; }
.sec-open { height: 27px; margin-top: 7px; background: #555; display: flex; align-items: center; gap: 6px; padding-left: 9px; font-size: 14px; font-weight: 500; color: #e4e4e4; }
.opt-title { margin: 0 0 0 21px; height: 20px; line-height: 20px; font-size: 13.500px; font-weight: 700; color: #e8e8e8; }
.t1 { margin-top: 16px; }
.t2 { margin-top: 13px; }
.t3 { margin-top: 21.300px; }
.opts { display: flex; flex-direction: column; }
.o1 { margin-top: 7px; }
.o2 { margin-top: 6.500px; }
.o3 { margin-top: 13.500px; position: relative; }
.o4 { margin-top: 4.700px; }
.o5 { margin-top: 6px; gap: 1px; }
.radio { display: flex; align-items: center; height: 22px; padding-left: 19px; gap: 6px; font-size: 13.200px; color: #d8d8d8; }
.radio::before { content: ""; width: 16px; height: 16px; border-radius: 50%; flex: none; background: #5a5a5a; box-shadow: inset 0 1px 1px #666; }
.radio.on::before { background: radial-gradient(circle, #222 0 3px, #a2a2a2 3.500px); }
.numbox { position: absolute; right: 22px; top: -3px; width: 36px; height: 23px; border-radius: 3px; background: #454545; color: #8a8a8a; font-size: 14px; line-height: 23px; padding-left: 8px; }
.check-row { height: 22px; margin-top: 11px; display: flex; align-items: center; padding-left: 20px; gap: 6px; font-size: 13.200px; color: #d8d8d8; }
.check { width: 16px; height: 16px; border-radius: 3px; flex: none; background: #888; box-shadow: 0 0 0 2.500px #555; display: flex; align-items: center; justify-content: center; }
.sec-list { margin-top: 14px; }
.sec { height: 27.500px; background: #434343; border-bottom: 1px solid #333; display: flex; align-items: center; gap: 7px; padding-left: 12px; font-size: 14px; font-weight: 500; color: #e0e0e0; }
.tooltip { position: absolute; left: 50px; top: 529px; width: 172px; height: 21px; background: #303030; border: 1px solid #232323; border-radius: 2px; font-size: 12.300px; line-height: 19px; text-align: center; color: #e4e4e4; white-space: nowrap; }
```
